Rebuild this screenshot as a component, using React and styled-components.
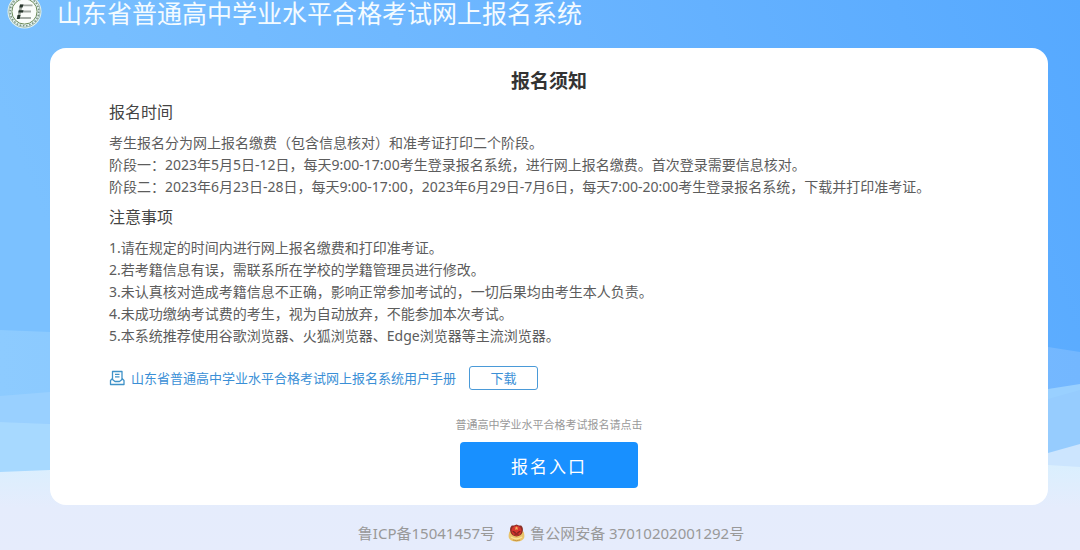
import React from "react";
import styled, { createGlobalStyle } from "styled-components";

const GlobalStyle = createGlobalStyle`
  *, *::before, *::after { box-sizing: border-box; }
  body {
    margin: 0;
    font-family: "Noto Sans", "Noto Sans CJK SC", sans-serif;
    color: #5c5c5c;
    background: #e6ecfc;
  }
  h1, h2, h3, p, ol { margin: 0; padding: 0; font-weight: 400; }
`;

const Page = styled.div`
  position: relative;
  isolation: isolate;
  min-height: 100vh;
  display: flex;
  flex-direction: column;
`;

const Backdrop = styled.svg`
  position: absolute;
  inset: 0;
  z-index: -1;
  width: 100%;
  height: 100%;
`;

const Header = styled.header`
  display: flex;
  align-items: flex-start;
  gap: 15px;
  height: 48px;
  padding-left: 7px;
`;

const SystemName = styled.h1`
  color: #f4fbff;
  font-size: 25px;
  line-height: 26px;
  white-space: nowrap;
`;

const Card = styled.main`
  display: flex;
  flex-direction: column;
  margin: 0 32px 0 50px;
  padding: 19px 59px 17px;
  border-radius: 16px;
  background: #fff;
`;

const CardTitle = styled.h2`
  margin-bottom: 6px;
  color: #333;
  font-size: 19px;
  font-weight: 700;
  line-height: 28px;
  text-align: center;
`;

const Section = styled.section`
  margin-bottom: 8px;
`;

const SectionTitle = styled.h3`
  margin-bottom: 8px;
  color: #444;
  font-size: 16px;
  line-height: 23px;
`;

const Line = styled.p`
  font-size: 14px;
  line-height: 22px;
`;

const NoteList = styled.ol`
  list-style: none;
  font-size: 14px;
  line-height: 22px;
`;

const ManualRow = styled.div`
  display: flex;
  align-items: center;
  gap: 13px;
  margin-top: 11px;
`;

const ManualLink = styled.a`
  display: flex;
  align-items: center;
  gap: 6px;
  color: #3a8fd6;
  font-size: 13px;
  line-height: 20px;
  text-decoration: none;
`;

const DownloadButton = styled.button`
  width: 69px;
  height: 24px;
  padding: 0;
  border: 1px solid #4a9ad8;
  border-radius: 3px;
  background: #fff;
  color: #3a8fd6;
  font: inherit;
  font-size: 13px;
  line-height: 20px;
  cursor: pointer;
`;

const Entry = styled.div`
  display: flex;
  flex-direction: column;
  align-items: center;
  gap: 9px;
  margin-top: 26px;
`;

const EntryHint = styled.p`
  color: #999;
  font-size: 11px;
  line-height: 17px;
`;

const EntryButton = styled.button`
  width: 178px;
  height: 46px;
  padding: 0;
  border: 0;
  border-radius: 4px;
  background: #1890ff;
  color: #fff;
  font: inherit;
  font-size: 17px;
  letter-spacing: 2px;
  cursor: pointer;
`;

const Footer = styled.footer`
  display: flex;
  justify-content: center;
  align-items: center;
  gap: 13px;
  padding: 17px 0 6px 22px;
  color: #999;
  font-size: 15px;
  line-height: 22px;
`;

const FooterLink = styled.a`
  display: flex;
  align-items: center;
  gap: 5px;
  color: inherit;
  text-decoration: none;
`;

const Hills = () => (
  <Backdrop viewBox="0 0 1080 550" preserveAspectRatio="none" aria-hidden="true">
    <defs>
      <linearGradient id="sky" x1="0" y1="0.2" x2="1" y2="0">
        <stop offset="0" stopColor="#7bc1ff" />
        <stop offset="0.5" stopColor="#6bb5ff" />
        <stop offset="1" stopColor="#56a9ff" />
      </linearGradient>
      <linearGradient id="ridge" x1="0" y1="0" x2="1" y2="0">
        <stop offset="0" stopColor="#8dcbff" />
        <stop offset="1" stopColor="#73b7ff" />
      </linearGradient>
      <linearGradient id="mist" x1="0" y1="0" x2="0" y2="1">
        <stop offset="0" stopColor="#daeffe" />
        <stop offset="0.5" stopColor="#e5ecfc" />
        <stop offset="1" stopColor="#e6ecfc" />
      </linearGradient>
    </defs>
    <rect width="1080" height="550" fill="url(#sky)" />
    <path d="M0 330 L50 332 L540 350 L1048 347 L1080 352 V550 H0Z" fill="url(#ridge)" />
    <path d="M0 396 L50 392 L540 420 L1048 389 L1080 384 V550 H0Z" fill="#99d0ff" />
    <path d="M0 422 L50 424 L540 430 L1048 399 L1080 390 V550 H0Z" fill="#96ccfe" />
    <path d="M0 422 L50 424 L540 440 V550 H0Z" fill="#a7d9ff" />
    <path d="M900 490 L1048 453 L1080 444 V550 H900Z" fill="#cce5fe" />
    <path d="M0 472 L50 470 L540 468 L1048 465 L1080 467 V550 H0Z" fill="url(#mist)" />
  </Backdrop>
);

const SchoolEmblem = () => (
  <svg width="35" height="29" viewBox="0 6 35 29" aria-hidden="true">
    <circle cx="17.5" cy="17.5" r="17" fill="#e6f3f0" />
    <circle cx="17.5" cy="17.5" r="15.8" fill="none" stroke="#8fae9f" strokeWidth="0.8" />
    <circle cx="17.5" cy="17.5" r="14.3" fill="none" stroke="#7d9486" strokeWidth="1.6" strokeDasharray="1.6 1.6" />
    <circle cx="17.5" cy="17.5" r="12.6" fill="#fafdfa" stroke="#6b8a58" strokeWidth="1" />
    <path d="M13 10.5h12.500v1.800H15.500l-1 4.300h9.500v1.800h-9.900l-1.100 4.600h11v1.900H10z" fill="#a3aaa3" />
    <path d="M13 10.500h3.500l-1 3h-3.200zM11.800 16.200h4.700l-.6 2.400h-4.700zM10.600 21h3l-1 3.900H9.800z" fill="#26352b" />
  </svg>
);

const ManualIcon = () => (
  <svg width="16" height="16" viewBox="0 0 16 16" fill="none" stroke="#3f92c8" strokeWidth="1.3" strokeLinejoin="round" aria-hidden="true">
    <path d="M3.5 10V1.5h9.500V10M6 4.300h4.500M6 6.800h4.500" />
    <path d="M3.500 8.500L1.500 10.500V14.500H15V10.500L13 8.500M3.500 9.500L6 11.500h4.500L13 9.500" />
  </svg>
);

const PoliceBadge = () => (
  <svg width="17" height="18" viewBox="0 0 17 18" aria-hidden="true">
    <path d="M1.500 7.500C0 12 .3 14.500 3 16.300c1.800 1 3.500 1.400 5.500 1.400s3.700-.4 5.500-1.400c2.700-1.800 3-4.300 1.500-8.800z" fill="#eac36a" />
    <path d="M3 13c3.500 2.400 7.500 2.400 11 0" fill="none" stroke="#fbe29a" strokeWidth="1.400" />
    <path d="M5 16c2.200.8 4.800.8 7 0" fill="none" stroke="#c99740" strokeWidth="1" />
    <path d="M8.500.5c1.700 1 3.300 1 4.700 1 2 2 2.100 4.600 1.300 6.700-.9 2.500-3 3.900-6 4.400-3-.5-5.100-1.900-6-4.400-.8-2.100-.7-4.700 1.300-6.700 1.400 0 3 0 4.700-1z" fill="#8a2f25" />
    <circle cx="8.500" cy="6.700" r="5" fill="#d6352e" />
    <path d="M8.500 2.300l.6 1.300 1.400.1-1.100.9.400 1.400-1.300-.8-1.300.8.400-1.400-1.100-.9 1.400-.1z" fill="#f6b25c" />
    <path d="M4.700 7.500l2.800 1M12.300 7.500l-2.800 1M6.500 10h4" stroke="#5a1e1c" strokeWidth="1" />
  </svg>
);

const timeLines = [
  "考生报名分为网上报名缴费（包含信息核对）和准考证打印二个阶段。",
  "阶段一：2023年5月5日-12日，每天9:00-17:00考生登录报名系统，进行网上报名缴费。首次登录需要信息核对。",
  "阶段二：2023年6月23日-28日，每天9:00-17:00，2023年6月29日-7月6日，每天7:00-20:00考生登录报名系统，下载并打印准考证。",
];

const notes = [
  "1.请在规定的时间内进行网上报名缴费和打印准考证。",
  "2.若考籍信息有误，需联系所在学校的学籍管理员进行修改。",
  "3.未认真核对造成考籍信息不正确，影响正常参加考试的，一切后果均由考生本人负责。",
  "4.未成功缴纳考试费的考生，视为自动放弃，不能参加本次考试。",
  "5.本系统推荐使用谷歌浏览器、火狐浏览器、Edge浏览器等主流浏览器。",
];

export default function App() {
  return (
    <Page lang="zh-CN">
      <GlobalStyle />
      <Hills />
      <Header>
        <SchoolEmblem />
        <SystemName>山东省普通高中学业水平合格考试网上报名系统</SystemName>
      </Header>
      <Card>
        <CardTitle>报名须知</CardTitle>
        <Section>
          <SectionTitle>报名时间</SectionTitle>
          {timeLines.map((line) => (
            <Line key={line}>{line}</Line>
          ))}
        </Section>
        <Section>
          <SectionTitle>注意事项</SectionTitle>
          <NoteList>
            {notes.map((note) => (
              <li key={note}>{note}</li>
            ))}
          </NoteList>
        </Section>
        <ManualRow>
          <ManualLink href="#manual">
            <ManualIcon />
            山东省普通高中学业水平合格考试网上报名系统用户手册
          </ManualLink>
          <DownloadButton type="button">下载</DownloadButton>
        </ManualRow>
        <Entry>
          <EntryHint>普通高中学业水平合格考试报名请点击</EntryHint>
          <EntryButton type="button">报名入口</EntryButton>
        </Entry>
      </Card>
      <Footer>
        <FooterLink href="#icp">鲁ICP备15041457号</FooterLink>
        <FooterLink href="#police">
          <PoliceBadge />
          鲁公网安备 37010202001292号
        </FooterLink>
      </Footer>
    </Page>
  );
}
